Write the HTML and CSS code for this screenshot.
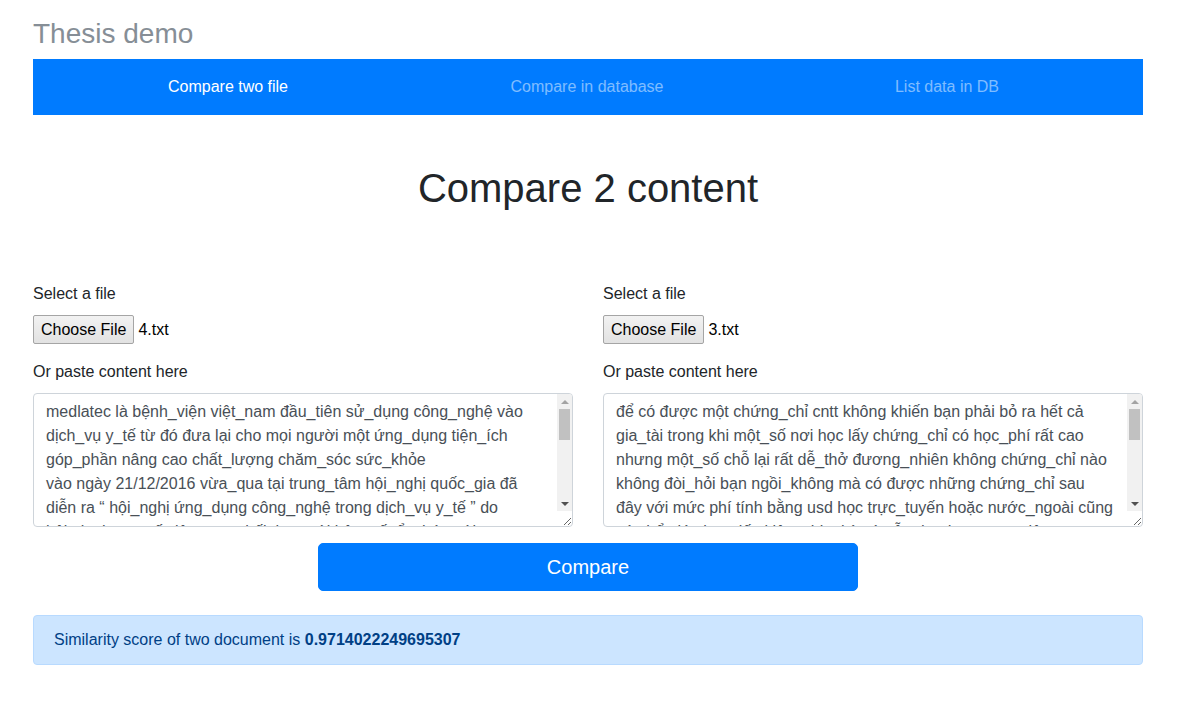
FILE: index.html
```html
<!DOCTYPE html>
<html lang="vi">
<head>
<meta charset="utf-8">
<title>Thesis demo</title>
<link rel="stylesheet" href="styles.css">
</head>
<body>
<div class="page">
  <h3 class="brand">Thesis demo</h3>
  <nav class="nav">
    <a class="nav-link active" href="#">Compare two file</a>
    <a class="nav-link" href="#">Compare in database</a>
    <a class="nav-link" href="#">List data in DB</a>
  </nav>

  <h1 class="title">Compare 2 content</h1>

  <div class="columns">
    <div class="col">
      <label class="label">Select a file</label>
      <div class="file-row">
        <span class="file-btn">Choose File</span>
        <span class="file-name">4.txt</span>
      </div>
      <label class="label">Or paste content here</label>
      <div class="field">
        <textarea class="content" rows="5">medlatec là bệnh_viện việt_nam đầu_tiên sử_dụng công_nghệ vào dịch_vụ y_tế từ đó đưa lại cho mọi người một ứng_dụng tiện_ích góp_phần nâng cao chất_lượng chăm_sóc sức_khỏe
vào ngày 21/12/2016 vừa_qua tại trung_tâm hội_nghị quốc_gia đã diễn ra “ hội_nghị ứng_dụng công_nghệ trong dịch_vụ y_tế ” do hội_tin_học y_tế việt_nam phối_hợp với bộ y_tế tổ_chức với sự tham_gia của nhiều bệnh_viện và doanh_nghiệp công_nghệ trên cả nước</textarea>
        <div class="scrollbar" aria-hidden="true">
          <span class="arrow arrow-up"></span>
          <span class="track"><span class="thumb"></span></span>
          <span class="arrow arrow-down"></span>
        </div>
      </div>
    </div>
    <div class="col">
      <label class="label">Select a file</label>
      <div class="file-row">
        <span class="file-btn">Choose File</span>
        <span class="file-name">3.txt</span>
      </div>
      <label class="label">Or paste content here</label>
      <div class="field">
        <textarea class="content" rows="5">để có được một chứng_chỉ cntt không khiến bạn phải bỏ ra hết cả gia_tài trong khi một_số nơi học lấy chứng_chỉ có học_phí rất cao nhưng một_số chỗ lại rất dễ_thở đương_nhiên không chứng_chỉ nào không đòi_hỏi bạn ngồi_không mà có được những chứng_chỉ sau đây với mức phí tính bằng usd học trực_tuyến hoặc nước_ngoài cũng có_thể giúp bạn tiết_kiệm chi_phí mà vẫn đạt được mục_tiêu nghề_nghiệp của mình</textarea>
        <div class="scrollbar" aria-hidden="true">
          <span class="arrow arrow-up"></span>
          <span class="track"><span class="thumb"></span></span>
          <span class="arrow arrow-down"></span>
        </div>
      </div>
    </div>
  </div>

  <div class="action">
    <button class="btn-compare" type="button">Compare</button>
  </div>

  <div class="alert">Similarity score of two document is <strong>0.9714022249695307</strong></div>
</div>
</body>
</html>
```

FILE: styles.css
```css
* { box-sizing: border-box; }

body {
  margin: 0;
  font-family: "Liberation Sans", Arial, sans-serif;
  font-size: 16px;
  line-height: 1.5;
  color: #212529;
  background: #fff;
}

.page {
  width: 1110px;
  margin: 0 0 0 33px;
  padding-bottom: 40px;
}

.brand {
  margin: 0 0 8px;
  padding-top: 17px;
  font-size: 28px;
  font-weight: normal;
  line-height: 34px;
  color: #868e96;
}

.nav {
  display: grid;
  grid-template-columns: 390px 328px 392px;
  height: 56px;
  align-items: center;
  background: #007bff;
}

.nav-link {
  text-align: center;
  text-decoration: none;
  color: rgba(255, 255, 255, 0.5);
  font-size: 16px;
  line-height: 24px;
}

.nav-link.active { color: #fff; }

.title {
  margin: 49px 0 0;
  text-align: center;
  font-size: 40px;
  font-weight: normal;
  line-height: 48px;
  color: #212529;
}

.columns {
  display: grid;
  grid-template-columns: 540px 540px;
  column-gap: 30px;
  margin-top: 70px;
}

.col {
  display: flex;
  flex-direction: column;
}

.label {
  display: block;
  line-height: 24px;
  margin-bottom: 9px;
}

.file-row {
  display: flex;
  align-items: center;
  height: 29px;
  margin-bottom: 16px;
}

.file-btn {
  display: inline-flex;
  align-items: center;
  height: 29px;
  padding: 0 7px;
  font-size: 16px;
  color: #000;
  background: linear-gradient(#f2f2f2, #e2e2e2);
  border: 1px solid #a5a5a5;
  border-radius: 2px;
}

.file-name {
  margin-left: 4px;
  font-size: 16px;
  color: #000;
}

.field {
  position: relative;
  width: 540px;
  height: 134px;
}

.content {
  display: block;
  width: 540px;
  height: 134px;
  padding: 6px 29px 6px 12px;
  font-family: "Liberation Sans", Arial, sans-serif;
  font-size: 16px;
  line-height: 24px;
  color: #495057;
  background: #fff;
  border: 1px solid #ced4da;
  border-radius: 4px;
  resize: vertical;
  overflow: hidden;
}

/* simulated classic scrollbar drawn over the textarea's right edge */
.scrollbar {
  position: absolute;
  top: 1px;
  right: 1px;
  bottom: 16px;
  width: 15px;
  display: flex;
  flex-direction: column;
  background: #f1f1f1;
  border-top-right-radius: 3px;
  pointer-events: none;
}

.arrow {
  height: 15px;
  display: flex;
  align-items: center;
  justify-content: center;
  flex: none;
}

.arrow::before {
  content: "";
  width: 0;
  height: 0;
  border-left: 4px solid transparent;
  border-right: 4px solid transparent;
}

.arrow-up::before {
  border-bottom: 4px solid #a3a3a3;
}

.arrow-down::before {
  border-top: 4px solid #505050;
}

.track {
  flex: 1;
  display: flex;
  flex-direction: column;
  padding: 0 2px;
}

.thumb {
  display: block;
  height: 31px;
  background: #c1c1c1;
}

.action {
  display: flex;
  margin-top: 16px;
  padding-left: 285px;
}

.btn-compare {
  width: 540px;
  height: 48px;
  font-family: "Liberation Sans", Arial, sans-serif;
  font-size: 20px;
  color: #fff;
  background: #007bff;
  border: 1px solid #007bff;
  border-radius: 5px;
  cursor: pointer;
}

.alert {
  margin-top: 24px;
  padding: 12px 20px;
  line-height: 24px;
  color: #004085;
  background: #cce5ff;
  border: 1px solid #b8daff;
  border-radius: 4px;
}

.alert strong { font-weight: bold; }
```
